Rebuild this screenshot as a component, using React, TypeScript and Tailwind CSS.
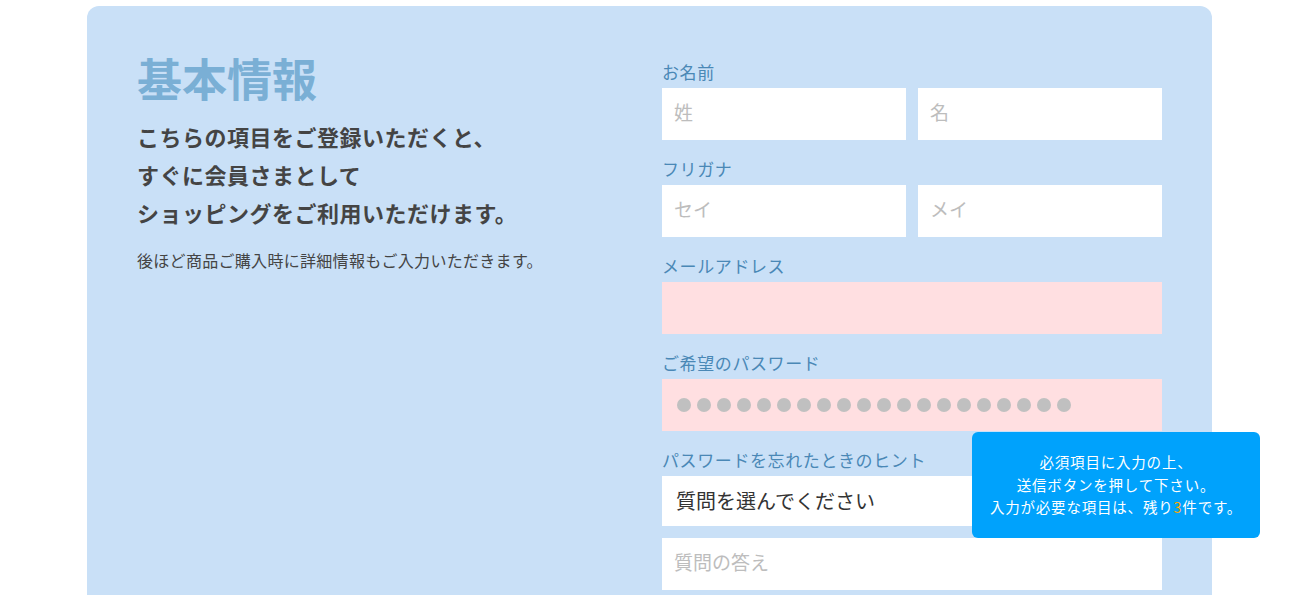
import React from 'react';

const font = { fontFamily: '"Noto Sans CJK JP", "Noto Sans", sans-serif' };

const Label: React.FC<{ children: React.ReactNode }> = ({ children }) => (
  <div className="text-[17px] leading-[24px] tracking-[0.6px] text-[#4a88b6] mb-1">{children}</div>
);

const TextBox: React.FC<{ placeholder?: string; pink?: boolean }> = ({ placeholder, pink }) => (
  <input
    readOnly
    placeholder={placeholder}
    className={`w-full h-[52px] px-3 pb-[5px] text-[19px] outline-none placeholder:text-[#bdbdbd] ${pink ? 'bg-[#ffdfe1]' : 'bg-white'}`}
    style={font}
  />
);

const App: React.FC = () => {
  return (
    <div className="relative w-[1305px] h-[595px] overflow-hidden bg-white" style={font}>
      <div className="ml-[87px] mt-[6px] w-[1125px] h-[700px] rounded-t-[12px] bg-[#c9e0f7] px-[50px] flex justify-between">
        {/* left */}
        <div className="pt-[45px]">
          <h1 className="text-[45px] leading-[54px] font-bold text-[#7aafd5]">基本情報</h1>
          <p className="mt-3 text-[22px] leading-[38px] tracking-[0.5px] font-bold text-[#444]">
            こちらの項目をご登録いただくと、
            <br />
            すぐに会員さまとして
            <br />
            ショッピングをご利用いただけます。
          </p>
          <p className="mt-[17px] text-[16px] leading-[24px] tracking-[0.3px] text-[#444]">
            後ほど商品ご購入時に詳細情報もご入力いただきます。
          </p>
        </div>

        {/* right */}
        <div className="w-[500px] pt-[54px] flex flex-col">
          <Label>お名前</Label>
          <div className="flex gap-3">
            <TextBox placeholder="姓" />
            <TextBox placeholder="名" />
          </div>

          <div className="mt-[17px]">
            <Label>フリガナ</Label>
            <div className="flex gap-3">
              <TextBox placeholder="セイ" />
              <TextBox placeholder="メイ" />
            </div>
          </div>

          <div className="mt-[17px]">
            <Label>メールアドレス</Label>
            <TextBox pink />
          </div>

          <div className="mt-[17px]">
            <Label>ご希望のパスワード</Label>
            <div className="h-[52px] bg-[#ffdfe1] flex items-center gap-[6px] pl-[15px]">
              {Array.from({ length: 20 }).map((_, i) => (
                <span key={i} className="w-[14px] h-[14px] rounded-full bg-[#c0c0c0]" />
              ))}
            </div>
          </div>

          <div className="mt-[17px]">
            <Label>パスワードを忘れたときのヒント</Label>
            <div className="h-[50px] bg-white flex items-center pl-[14px] text-[20px] text-[#333]">
              質問を選んでください
            </div>
          </div>

          <div className="mt-3">
            <TextBox placeholder="質問の答え" />
          </div>
        </div>
      </div>

      {/* notice tooltip */}
      <div className="absolute left-[972px] top-[432px] w-[288px] h-[106px] rounded-[6px] bg-[#00a2fc] flex flex-col items-center justify-center text-white text-[14.5px] leading-[22.5px] tracking-[0.8px]">
        <div>必須項目に入力の上、</div>
        <div>送信ボタンを押して下さい。</div>
        <div>
          入力が必要な項目は、残り<span className="text-[#ffa800]">3</span>件です。
        </div>
      </div>
    </div>
  );
};

export default App;
